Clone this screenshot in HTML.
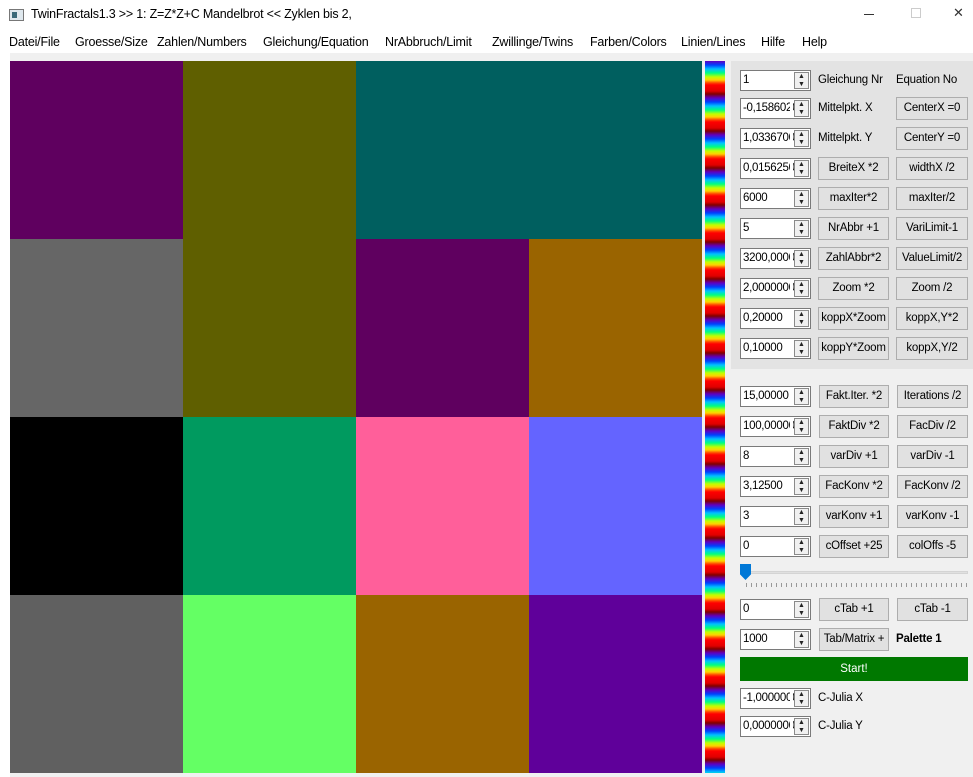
<!DOCTYPE html>
<html><head><meta charset="utf-8"><style>
*{box-sizing:border-box;margin:0;padding:0}
body{width:973px;height:777px;background:#f0f0f0;font-family:"Liberation Sans",sans-serif;font-size:12px;color:#000;position:relative;overflow:hidden}
.a{position:absolute}
.title{left:0;top:0;width:973px;height:31px;background:#fff}
.menu{left:0;top:31px;width:973px;height:22px;background:#fff}
.menu span{position:absolute;top:4px;font-size:12.5px;letter-spacing:-0.2px}
.cell{position:absolute;width:173px;height:178px}
.strip{left:705px;top:61px;width:20px;height:712px;background:repeating-linear-gradient(180deg,#6000c0 0px,#0040ff 4px,#00c0ff 8px,#00ff80 12px,#c0ff00 16px,#ffd000 19px,#ff4000 22px,#ff0000 24px,#e00000 30px,#800000 33px,#6000c0 37px)}
.sp{position:absolute;width:71px;height:21px;background:#fff;border:1px solid #7a7a7a;font-size:11.5px;letter-spacing:-0.3px;padding:3px 0 0 2px;overflow:hidden;white-space:nowrap}
.sp i{position:absolute;right:1px;top:1px;width:15px;height:17px;border:1px solid #8a8a8a;background:#f0f0f0;font-style:normal;font-size:7px;line-height:8px;text-align:center;color:#222;letter-spacing:0}
.sp b{position:absolute;right:17px;top:0;width:3px;height:19px;background:#fff}
.bt{position:absolute;height:23px;background:#e1e1e1;border:1px solid #adadad;font-size:11.5px;letter-spacing:-0.2px;text-align:center;line-height:21px;white-space:nowrap;overflow:hidden}
.lb{position:absolute;font-size:11.5px;letter-spacing:-0.2px;white-space:nowrap}
</style></head><body>
<div class="a title"></div>
<div class="a" style="left:9px;top:9px;width:15px;height:12px;border:1px solid #777;background:#dfe8ee"><div style="position:absolute;left:2px;top:2px;width:5px;height:6px;background:#3a6a7a"></div></div>
<div class="a" style="left:31px;top:7px;font-size:12.5px;letter-spacing:-0.2px">TwinFractals1.3 &gt;&gt; 1: Z=Z*Z+C Mandelbrot &lt;&lt; Zyklen bis 2,</div>
<div class="a" style="left:864px;top:14px;width:10px;height:1px;background:#333"></div>
<div class="a" style="left:911px;top:8px;width:10px;height:10px;border:1px solid #ccc"></div>
<div class="a" style="left:953px;top:5px;font-size:13px;color:#333">✕</div>
<div class="a menu">
<span style="left:9px">Datei/File</span><span style="left:75px">Groesse/Size</span><span style="left:157px">Zahlen/Numbers</span><span style="left:263px">Gleichung/Equation</span><span style="left:385px">NrAbbruch/Limit</span><span style="left:492px">Zwillinge/Twins</span><span style="left:590px">Farben/Colors</span><span style="left:681px">Linien/Lines</span><span style="left:761px">Hilfe</span><span style="left:802px">Help</span>
</div>
<div class="a" style="left:0;top:53px;width:10px;height:724px;background:#fff"></div>
<div class="cell" style="left:10px;top:61px;background:#5f005f"></div>
<div class="cell" style="left:183px;top:61px;height:356px;background:#5f5f00"></div>
<div class="cell" style="left:356px;top:61px;width:346px;background:#005f5f"></div>
<div class="cell" style="left:10px;top:239px;background:#666666"></div>
<div class="cell" style="left:356px;top:239px;background:#5f005f"></div>
<div class="cell" style="left:529px;top:239px;background:#9a6400"></div>
<div class="cell" style="left:10px;top:417px;background:#000"></div>
<div class="cell" style="left:183px;top:417px;background:#009a5f"></div>
<div class="cell" style="left:356px;top:417px;background:#ff5f9a"></div>
<div class="cell" style="left:529px;top:417px;background:#6464ff"></div>
<div class="cell" style="left:10px;top:595px;background:#606060"></div>
<div class="cell" style="left:183px;top:595px;background:#64ff64"></div>
<div class="cell" style="left:356px;top:595px;background:#9a6400"></div>
<div class="cell" style="left:529px;top:595px;background:#5f009a"></div>
<div class="a strip"></div>
<div class="a" style="left:731px;top:61px;width:242px;height:308px;background:#e3e3e3"></div>

<div class="sp" style="left:740px;top:70px">1<b></b><i>▲<br>▼</i></div><div class="lb" style="left:818px;top:74px">Gleichung Nr</div><div class="lb" style="left:896px;top:74px">Equation No</div>
<div class="sp" style="left:740px;top:98px">-0,1586020<b></b><i>▲<br>▼</i></div><div class="lb" style="left:818px;top:102px">Mittelpkt. X</div><div class="bt" style="left:896px;top:97px;width:72px">CenterX =0</div>
<div class="sp" style="left:740px;top:128px">1,0336700<b></b><i>▲<br>▼</i></div><div class="lb" style="left:818px;top:132px">Mittelpkt. Y</div><div class="bt" style="left:896px;top:127px;width:72px">CenterY =0</div>
<div class="sp" style="left:740px;top:158px">0,0156250<b></b><i>▲<br>▼</i></div><div class="bt" style="left:818px;top:157px;width:71px">BreiteX *2</div><div class="bt" style="left:896px;top:157px;width:72px">widthX /2</div>
<div class="sp" style="left:740px;top:188px">6000<b></b><i>▲<br>▼</i></div><div class="bt" style="left:818px;top:187px;width:71px">maxIter*2</div><div class="bt" style="left:896px;top:187px;width:72px">maxIter/2</div>
<div class="sp" style="left:740px;top:218px">5<b></b><i>▲<br>▼</i></div><div class="bt" style="left:818px;top:217px;width:71px">NrAbbr +1</div><div class="bt" style="left:896px;top:217px;width:72px">VariLimit-1</div>
<div class="sp" style="left:740px;top:248px">3200,00000<b></b><i>▲<br>▼</i></div><div class="bt" style="left:818px;top:247px;width:71px">ZahlAbbr*2</div><div class="bt" style="left:896px;top:247px;width:72px">ValueLimit/2</div>
<div class="sp" style="left:740px;top:278px">2,0000000<b></b><i>▲<br>▼</i></div><div class="bt" style="left:818px;top:277px;width:71px">Zoom *2</div><div class="bt" style="left:896px;top:277px;width:72px">Zoom /2</div>
<div class="sp" style="left:740px;top:308px">0,20000<b></b><i>▲<br>▼</i></div><div class="bt" style="left:818px;top:307px;width:71px">koppX*Zoom</div><div class="bt" style="left:896px;top:307px;width:72px">koppX,Y*2</div>
<div class="sp" style="left:740px;top:338px">0,10000<b></b><i>▲<br>▼</i></div><div class="bt" style="left:818px;top:337px;width:71px">koppY*Zoom</div><div class="bt" style="left:896px;top:337px;width:72px">koppX,Y/2</div>

<div class="sp" style="left:740px;top:386px">15,00000<b></b><i>▲<br>▼</i></div><div class="bt" style="left:819px;top:385px;width:70px">Fakt.Iter. *2</div><div class="bt" style="left:897px;top:385px;width:71px">Iterations /2</div>
<div class="sp" style="left:740px;top:416px">100,00000<b></b><i>▲<br>▼</i></div><div class="bt" style="left:819px;top:415px;width:70px">FaktDiv *2</div><div class="bt" style="left:897px;top:415px;width:71px">FacDiv /2</div>
<div class="sp" style="left:740px;top:446px">8<b></b><i>▲<br>▼</i></div><div class="bt" style="left:819px;top:445px;width:70px">varDiv +1</div><div class="bt" style="left:897px;top:445px;width:71px">varDiv -1</div>
<div class="sp" style="left:740px;top:476px">3,12500<b></b><i>▲<br>▼</i></div><div class="bt" style="left:819px;top:475px;width:70px">FacKonv *2</div><div class="bt" style="left:897px;top:475px;width:71px">FacKonv /2</div>
<div class="sp" style="left:740px;top:506px">3<b></b><i>▲<br>▼</i></div><div class="bt" style="left:819px;top:505px;width:70px">varKonv +1</div><div class="bt" style="left:897px;top:505px;width:71px">varKonv -1</div>
<div class="sp" style="left:740px;top:536px">0<b></b><i>▲<br>▼</i></div><div class="bt" style="left:819px;top:535px;width:70px">cOffset +25</div><div class="bt" style="left:897px;top:535px;width:71px">colOffs -5</div>
<div class="a" style="left:745px;top:571px;width:223px;height:3px;background:#e0e0e0;border:1px solid #d4d4d4"></div>
<div class="a" style="left:740px;top:564px;width:11px;height:16px;background:#0078d7;clip-path:polygon(0 0,100% 0,100% 65%,50% 100%,0 65%)"></div>
<div class="a" style="left:746px;top:583px;width:221px;height:4px;background:repeating-linear-gradient(90deg,#999 0 1px,transparent 1px 5px)"></div>
<div class="sp" style="left:740px;top:599px">0<b></b><i>▲<br>▼</i></div><div class="bt" style="left:819px;top:598px;width:70px">cTab +1</div><div class="bt" style="left:897px;top:598px;width:71px">cTab -1</div>
<div class="sp" style="left:740px;top:629px">1000<b></b><i>▲<br>▼</i></div><div class="bt" style="left:819px;top:628px;width:70px">Tab/Matrix +</div><div class="lb" style="left:896px;top:633px;font-weight:bold">Palette 1</div>
<div class="a" style="left:740px;top:657px;width:228px;height:24px;background:#007800;color:#fff;text-align:center;line-height:24px;font-size:11.5px">Start!</div>
<div class="sp" style="left:740px;top:688px">-1,0000000<b></b><i>▲<br>▼</i></div><div class="lb" style="left:818px;top:692px">C-Julia X</div>
<div class="sp" style="left:740px;top:716px">0,0000000<b></b><i>▲<br>▼</i></div><div class="lb" style="left:818px;top:720px">C-Julia Y</div>
</body></html>
